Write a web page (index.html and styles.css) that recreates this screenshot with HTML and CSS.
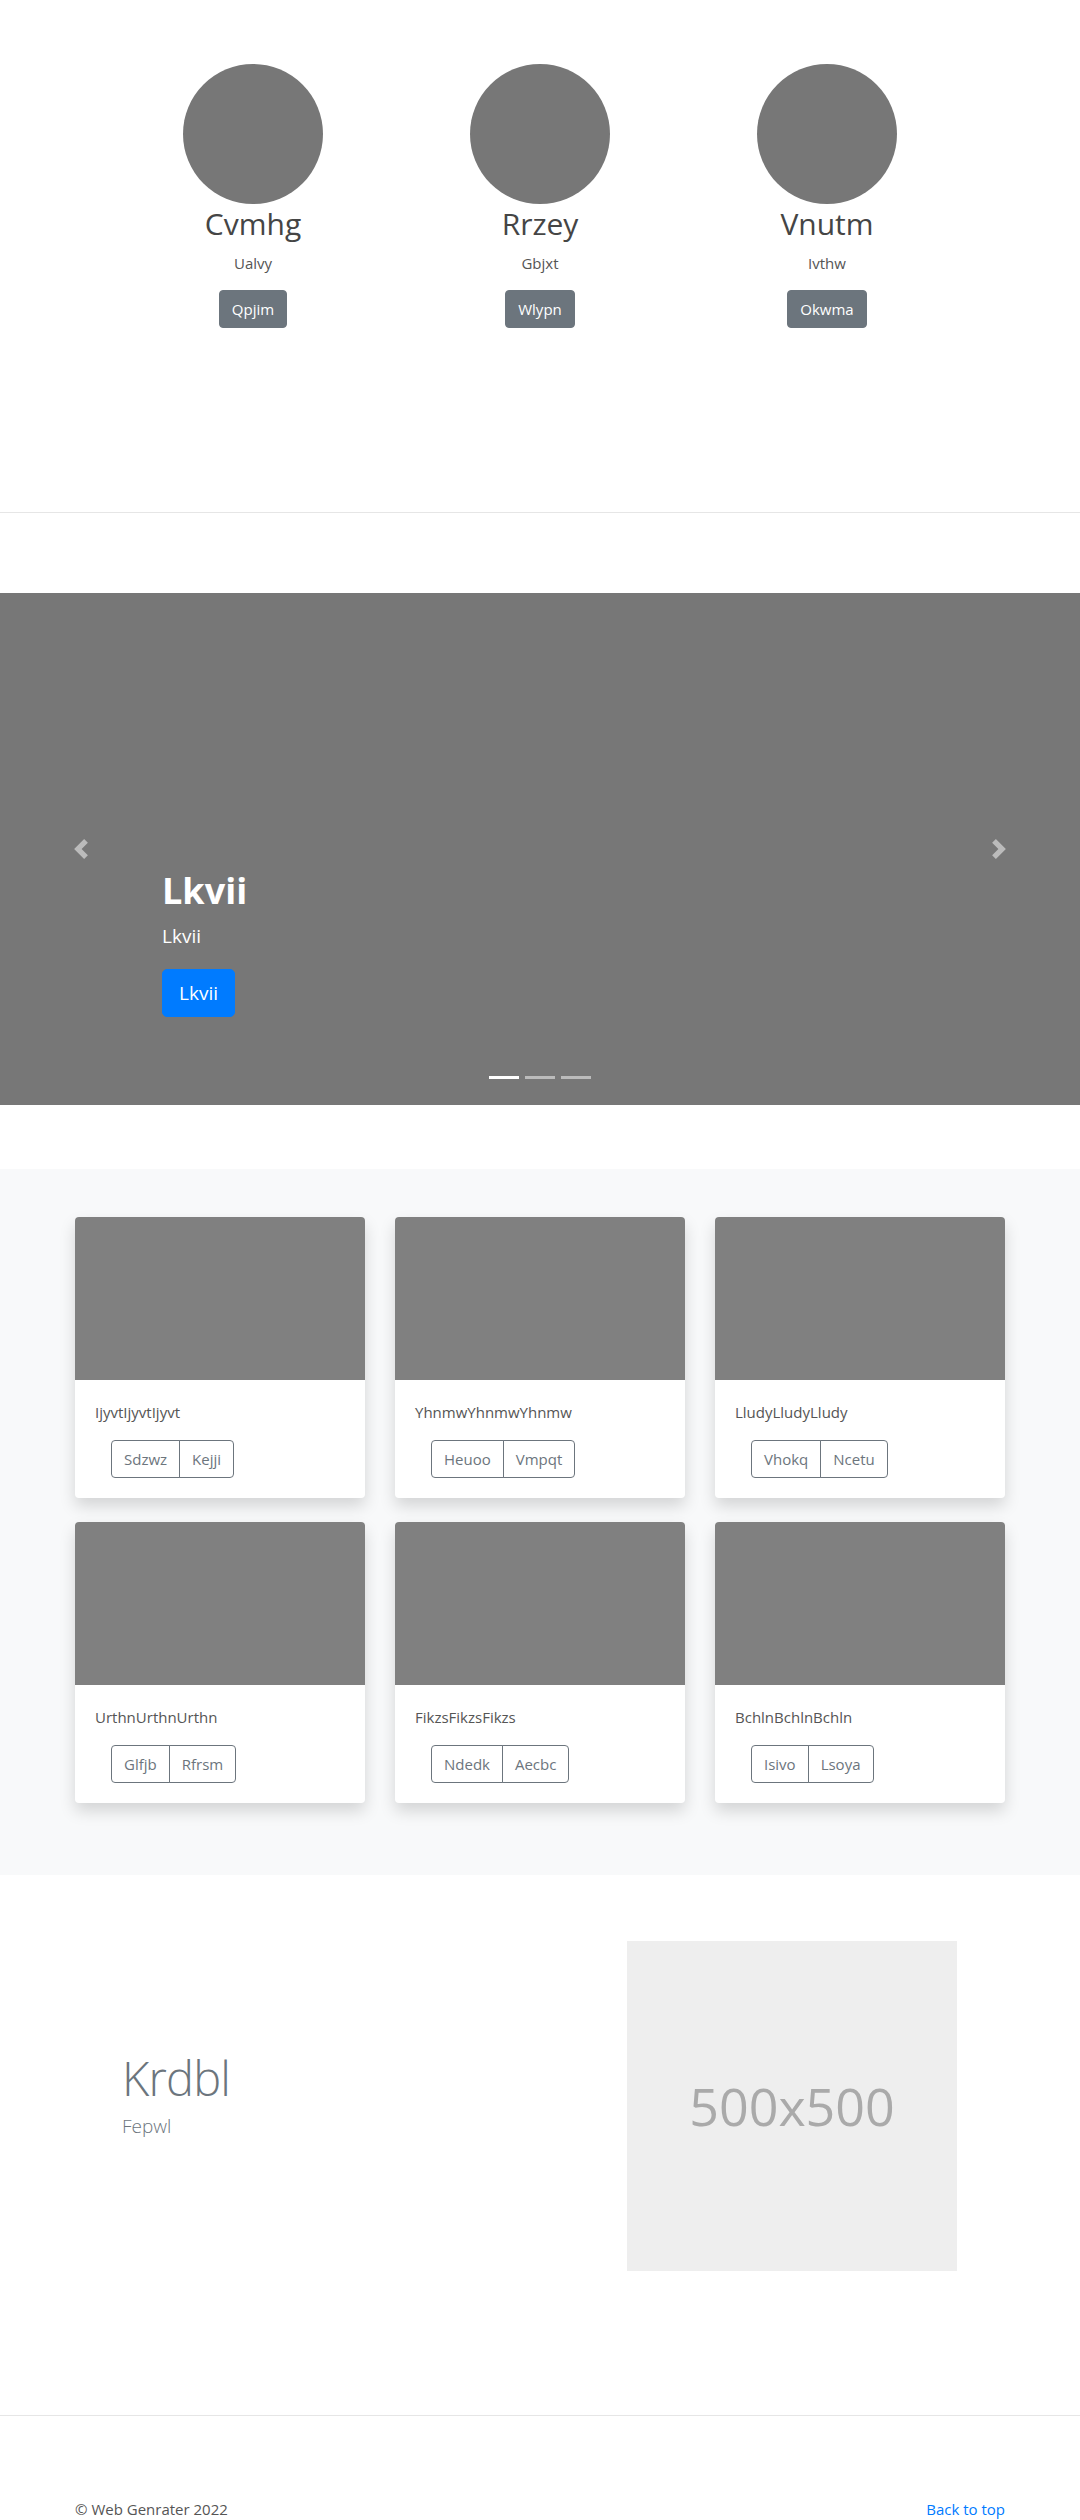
FILE: index.html
```html
<!DOCTYPE html>
<html lang="en">
<head>
<meta charset="utf-8">
<title>Web Genrater</title>
<link rel="stylesheet" href="styles.css">
</head>
<body>
<section class="marketing">
  <div class="marketing-col">
    <div class="circle"></div>
    <h2 class="m-title">Cvmhg</h2>
    <p class="m-text">Ualvy</p>
    <a class="btn btn-secondary" href="#">Qpjim</a>
  </div>
  <div class="marketing-col">
    <div class="circle"></div>
    <h2 class="m-title">Rrzey</h2>
    <p class="m-text">Gbjxt</p>
    <a class="btn btn-secondary" href="#">Wlypn</a>
  </div>
  <div class="marketing-col">
    <div class="circle"></div>
    <h2 class="m-title">Vnutm</h2>
    <p class="m-text">Ivthw</p>
    <a class="btn btn-secondary" href="#">Okwma</a>
  </div>
</section>

<hr class="divider divider-top">

<section class="carousel">
  <div class="caption">
    <h1 class="caption-title">Lkvii</h1>
    <p class="caption-text">Lkvii</p>
    <a class="btn btn-primary btn-lg" href="#">Lkvii</a>
  </div>
  <a class="ctrl ctrl-prev" href="#" aria-label="Previous">
    <svg width="20" height="20" viewBox="0 0 8 8"><path fill="#fff" d="M5.25 0l-4 4 4 4 1.5-1.5L4.25 4l2.5-2.5L5.25 0z"/></svg>
  </a>
  <a class="ctrl ctrl-next" href="#" aria-label="Next">
    <svg width="20" height="20" viewBox="0 0 8 8"><path fill="#fff" d="M2.75 0l-1.5 1.5L3.75 4l-2.5 2.5L2.75 8l4-4-4-4z"/></svg>
  </a>
  <ol class="indicators">
    <li class="active"></li>
    <li></li>
    <li></li>
  </ol>
</section>

<section class="album">
  <div class="card-grid">
    <div class="card">
      <div class="card-img"></div>
      <div class="card-body">
        <p class="card-text">IjyvtIjyvtIjyvt</p>
        <div class="btn-group">
          <button class="btn btn-outline">Sdzwz</button>
          <button class="btn btn-outline">Kejji</button>
        </div>
      </div>
    </div>
    <div class="card">
      <div class="card-img"></div>
      <div class="card-body">
        <p class="card-text">YhnmwYhnmwYhnmw</p>
        <div class="btn-group">
          <button class="btn btn-outline">Heuoo</button>
          <button class="btn btn-outline">Vmpqt</button>
        </div>
      </div>
    </div>
    <div class="card">
      <div class="card-img"></div>
      <div class="card-body">
        <p class="card-text">LludyLludyLludy</p>
        <div class="btn-group">
          <button class="btn btn-outline">Vhokq</button>
          <button class="btn btn-outline">Ncetu</button>
        </div>
      </div>
    </div>
    <div class="card">
      <div class="card-img"></div>
      <div class="card-body">
        <p class="card-text">UrthnUrthnUrthn</p>
        <div class="btn-group">
          <button class="btn btn-outline">Glfjb</button>
          <button class="btn btn-outline">Rfrsm</button>
        </div>
      </div>
    </div>
    <div class="card">
      <div class="card-img"></div>
      <div class="card-body">
        <p class="card-text">FikzsFikzsFikzs</p>
        <div class="btn-group">
          <button class="btn btn-outline">Ndedk</button>
          <button class="btn btn-outline">Aecbc</button>
        </div>
      </div>
    </div>
    <div class="card">
      <div class="card-img"></div>
      <div class="card-body">
        <p class="card-text">BchlnBchlnBchln</p>
        <div class="btn-group">
          <button class="btn btn-outline">Isivo</button>
          <button class="btn btn-outline">Lsoya</button>
        </div>
      </div>
    </div>
  </div>
</section>

<section class="featurette">
  <div class="featurette-text">
    <h2 class="featurette-heading">Krdbl</h2>
    <p class="lead">Fepwl</p>
  </div>
  <div class="placeholder">500x500</div>
</section>

<hr class="divider divider-bottom">

<footer class="footer">
  <p class="copy">&copy; Web Genrater 2022</p>
  <a class="back-top" href="#">Back to top</a>
</footer>
</body>
</html>
```

FILE: styles.css
```css
html, body {
  margin: 0;
  padding: 0;
}

body {
  font-family: "Open Sans", "Noto Sans", sans-serif;
  font-size: 15px;
  line-height: 24px;
  color: #444;
  background: #fff;
}

/* Buttons */
.btn {
  display: inline-block;
  box-sizing: border-box;
  font-family: inherit;
  font-size: 15px;
  line-height: 24px;
  padding: 6px 12px;
  border: 1px solid transparent;
  border-radius: 4px;
  text-decoration: none;
  text-align: center;
  cursor: pointer;
}

.btn-secondary {
  background: #6c757d;
  border-color: #6c757d;
  color: #fff;
}

.btn-primary {
  background: #007bff;
  border-color: #007bff;
  color: #fff;
}

.btn-lg {
  font-size: 19px;
  line-height: 30px;
  padding: 8px 16px;
  border-radius: 5px;
}

.btn-outline {
  background: transparent;
  border-color: #6c757d;
  color: #6c757d;
}

/* Marketing */
.marketing {
  display: grid;
  grid-template-columns: repeat(3, 287px);
  justify-content: center;
  padding-top: 64px;
}

.marketing-col {
  display: flex;
  flex-direction: column;
  align-items: center;
  text-align: center;
}

.circle {
  width: 140px;
  height: 140px;
  border-radius: 50%;
  background: #777;
}

.m-title {
  margin: 1px 0 8px;
  font-size: 30px;
  line-height: 38px;
  font-weight: 400;
  color: #454545;
}

.m-text {
  margin: 0 0 15px;
  font-size: 15px;
  line-height: 24px;
  color: #555;
}

/* Dividers */
.divider {
  border: 0;
  border-top: 1px solid #e6e6e6;
  height: 0;
  margin: 0;
}

.divider-top {
  margin-top: 184px;
  margin-bottom: 80px;
}

.divider-bottom {
  margin-top: 144px;
}

/* Carousel */
.carousel {
  position: relative;
  box-sizing: border-box;
  height: 512px;
  background: #777;
  padding: 275px 162px 0;
  margin-bottom: 64px;
}

.caption {
  display: flex;
  flex-direction: column;
  align-items: flex-start;
  color: #fff;
}

.caption-title {
  margin: 0 0 8px;
  font-size: 36px;
  line-height: 45px;
  font-weight: 700;
}

.caption-text {
  margin: 0 0 18px;
  font-size: 19px;
  line-height: 30px;
}

.ctrl {
  position: absolute;
  top: 0;
  bottom: 0;
  width: 162px;
  display: flex;
  align-items: center;
  justify-content: center;
  opacity: 0.5;
}

.ctrl svg {
  display: block;
}

.ctrl-prev {
  left: 0;
}

.ctrl-next {
  right: 0;
}

.indicators {
  position: absolute;
  left: 0;
  right: 0;
  bottom: 0;
  margin: 0 0 16px;
  padding: 0;
  list-style: none;
  display: flex;
  justify-content: center;
}

.indicators li {
  width: 30px;
  height: 3px;
  margin: 0 3px;
  border-top: 10px solid transparent;
  border-bottom: 10px solid transparent;
  background: #fff;
  background-clip: padding-box;
  opacity: 0.5;
}

.indicators li.active {
  opacity: 1;
}

/* Album */
.album {
  background: #f8f9fa;
  padding: 48px 0 72px;
}

.card-grid {
  width: 930px;
  margin: 0 auto;
  display: grid;
  grid-template-columns: repeat(3, 290px);
  column-gap: 30px;
  row-gap: 24px;
}

.card {
  background: #fff;
  border-radius: 4px;
  overflow: hidden;
  box-shadow: 0 8px 16px rgba(0, 0, 0, 0.15);
}

.card-img {
  height: 163px;
  background: #808080;
}

.card-body {
  padding: 20px;
}

.card-text {
  margin: 0 0 16px;
  font-size: 15px;
  line-height: 24px;
  color: #555;
}

.btn-group {
  display: flex;
  margin-left: 16px;
}

.btn-group .btn:first-child {
  border-top-right-radius: 0;
  border-bottom-right-radius: 0;
}

.btn-group .btn:last-child {
  margin-left: -1px;
  border-top-left-radius: 0;
  border-bottom-left-radius: 0;
}

/* Featurette */
.featurette {
  display: grid;
  grid-template-columns: 505px 330px;
  align-items: center;
  padding-left: 122px;
  margin-top: 66px;
}

.featurette-heading {
  margin: 0 0 10px;
  font-size: 47px;
  line-height: 47px;
  font-weight: 300;
  letter-spacing: -0.8px;
  color: #6c757d;
}

.lead {
  margin: 0 0 16px;
  font-size: 19px;
  line-height: 28.5px;
  font-weight: 300;
  color: #6c757d;
}

.placeholder {
  width: 330px;
  height: 330px;
  background: #eee;
  color: #aaa;
  display: flex;
  align-items: center;
  justify-content: center;
  font-size: 52px;
  line-height: 1;
}

/* Footer */
.footer {
  display: flex;
  justify-content: space-between;
  padding: 0 75px;
  margin-top: 82px;
  font-size: 15px;
  line-height: 22px;
}

.copy {
  margin: 0;
  color: #555;
}

.back-top {
  color: #007bff;
  text-decoration: none;
}
```
